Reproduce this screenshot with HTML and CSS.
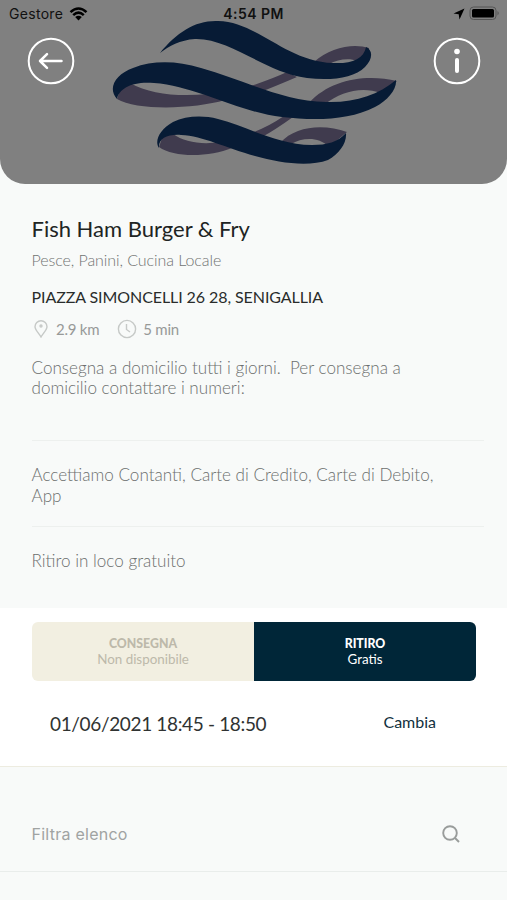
FILE: index.html
```html
<!DOCTYPE html>
<html lang="it">
<head>
<meta charset="utf-8">
<meta name="viewport" content="width=device-width, initial-scale=1">
<title>Fish Ham Burger &amp; Fry</title>
<link rel="stylesheet" href="styles.css">
</head>
<body>
<header class="hero">
  <svg class="hero-logo" viewBox="0 0 507 184" aria-hidden="true">
    <g class="ribbon-back">
      <path d="M314 62C330 47 354 43 369 48L367 60L357 61C350 58 338 59 329 64Z"/>
      <path d="M287 72Q272 79 245 88L258 93Q276 86 297 77Z"/>
      <path d="M309 103C331 79 366 74 397 81L381 93C361 86 341 92 325 104Z"/>
      <path d="M284 116Q268 127 251 133L262 137Q275 130 293 117Z"/>
      <path d="M280 143C296 125 325 124 347 132L329 147C318 136 302 138 291 144Z"/>
      <path d="M122 84L130 83C150 94 177 97 208 94L225 100C195 109 137 111 117 99Z"/>
      <path d="M163 135L173 134C184 142 202 145 220 142L232 148C210 157 174 158 159 147Z"/>
    </g>
    <g class="ribbon-front">
      <path d="M160 53C177 32 196 20 218 21C258 22 285 61 333 63C351 64 364 59 366 47C373 50 373 59 365 67C354 78 331 81 307 78C264 72 230 38 195 39C180 40 169 46 160 53Z"/>
      <path d="M117 99C107 88 116 74 133 68C154 60 177 61 201 68C244 80 282 101 326 102C355 103 378 95 396 80C397 89 388 100 375 107C350 120 316 121 282 117C238 112 196 86 154 83C133 81 119 88 117 99Z"/>
      <path d="M159 148C154 141 160 129 173 122C186 116 202 115 218 119C249 127 275 144 312 145C327 145 338 142 346 133C347 143 339 154 328 160C309 167 279 163 255 156C226 148 203 136 181 135C167 134 158 139 159 148Z"/>
    </g>
  </svg>
  <div class="status-bar">
    <div class="carrier">Gestore
      <svg class="wifi" viewBox="0 0 19 14" aria-hidden="true"><path d="M1.500 5.200Q9.500-2.200 17.500 5.200M4.200 8.100Q9.500 3.200 14.800 8.100"/><path class="solid" d="M6.200 10.100Q9.500 7.400 12.800 10.100L9.500 13.500Z"/></svg>
    </div>
    <div class="clock">4:54 PM</div>
    <div class="power">
      <svg class="location" viewBox="0 0 12 12" aria-hidden="true"><path d="M11.500.5L.5 5.500L5.700 6.300L6.500 11.500Z"/></svg>
      <svg class="battery" viewBox="0 0 31 15" aria-hidden="true"><rect class="case" x="1" y="1" width="26" height="12.500" rx="3.500"/><rect x="3" y="3" width="22" height="8.500" rx="1.500"/><path class="tip" d="M28.500 5Q31 7.200 28.500 9.500Z"/></svg>
    </div>
  </div>
  <nav class="hero-nav">
    <button class="round" aria-label="Indietro"><svg viewBox="0 0 48 48"><circle cx="24" cy="24" r="22.300"/><path d="M34.500 24H13M20 17.200L13 24L20 30.800"/></svg></button>
    <button class="round" aria-label="Informazioni"><svg viewBox="0 0 48 48"><circle cx="24" cy="24" r="22.300"/><path class="thick" d="M24 23V34"/><circle class="dot" cx="24" cy="14.500" r="2.800"/></svg></button>
  </nav>
</header>
<main>
  <section class="details">
    <h1>Fish Ham Burger &amp; Fry</h1>
    <p class="categories">Pesce, Panini, Cucina Locale</p>
    <p class="address">PIAZZA SIMONCELLI 26 28, SENIGALLIA</p>
    <div class="meta">
      <svg class="pin" viewBox="0 0 14 18" aria-hidden="true"><path d="M7 17C5.500 14 1 10 1 6.800A6 6 0 0 1 13 6.800C13 10 8.500 14 7 17Z"/><circle cx="7" cy="6" r="1"/></svg>
      <span>2.9 km</span>
      <svg class="time-icon" viewBox="0 0 20 20" aria-hidden="true"><circle cx="10" cy="10" r="8.600"/><path d="M9.500 5V10.500L13 13"/></svg>
      <span>5 min</span>
    </div>
    <p class="note delivery">Consegna a domicilio tutti i giorni.&nbsp; Per consegna a<br>domicilio contattare i numeri:</p>
    <p class="note payments">Accettiamo Contanti, Carte di Credito, Carte di Debito,<br>App</p>
    <p class="note pickup">Ritiro in loco gratuito</p>
  </section>
  <section class="booking">
    <div class="modes">
      <button class="mode unavailable"><strong>CONSEGNA</strong><span>Non disponibile</span></button>
      <button class="mode selected"><strong>RITIRO</strong><span>Gratis</span></button>
    </div>
    <div class="slot"><span class="date">01/06/2021 18:45 - 18:50</span><a class="change">Cambia</a></div>
  </section>
  <section class="filter">
    <span>Filtra elenco</span>
    <svg class="search" viewBox="0 0 20 20" aria-hidden="true"><circle cx="9" cy="9" r="6.800"/><path d="M14 14L18 18"/></svg>
  </section>
</main>
</body>
</html>
```
FILE: styles.css
```css
* { box-sizing: border-box; }
body { margin: 0; height: 900px; overflow: hidden; background: #f8faf9; font-family: Lato, "Liberation Sans", sans-serif; }
h1, p { margin: 0; white-space: nowrap; }
button { border: 0; padding: 0; font: inherit; background: none; }
svg { display: block; flex: none; }
.hero { position: relative; height: 184px; background: #808080; border-radius: 0 0 25px 25px; overflow: hidden; }
.hero-logo { position: absolute; inset: 0; width: 507px; height: 184px; }
.ribbon-back { fill: #403b4e; }
.ribbon-front { fill: #071b35; }
.status-bar { position: relative; display: grid; grid-template-columns: 1fr auto 1fr; align-items: center; height: 27px; padding: 0 7px 0 9px; font: 14px Inter, sans-serif; color: #111; }
.carrier { display: flex; align-items: center; gap: 6px; letter-spacing: .3px; }
.wifi { width: 19px; height: 14px; fill: none; stroke: #000; stroke-width: 2.5; }
.wifi .solid { fill: #000; stroke: none; }
.clock { margin-right: 2px; font-weight: 600; letter-spacing: .45px; }
.power { display: flex; justify-content: flex-end; align-items: center; gap: 4px; }
.location { width: 12px; height: 12px; }
.battery { width: 31px; height: 15px; }
.battery .case { fill: none; stroke: #555; stroke-width: 1; }
.battery .tip { fill: #555; }
.hero-nav { position: relative; display: flex; justify-content: space-between; padding: 10px 26px 0 27px; }
.round, .round svg { width: 48px; height: 48px; }
.round svg { fill: none; stroke: #fff; stroke-width: 2; stroke-linecap: round; stroke-linejoin: round; }
.round path { stroke-width: 2.5; }
.round .thick { stroke-width: 4; }
.round .dot { fill: #fff; stroke: none; }
.details { height: 424px; padding: 31px 23px 0 31.5px; }
h1 { font-size: 22px; line-height: 27px; font-weight: 400; color: #202423; }
.categories { margin-top: 8px; font-size: 16px; line-height: 20px; letter-spacing: -.07px; color: #707372; font-weight: 300; }
.address { margin-top: 17px; font-size: 16px; line-height: 19px; letter-spacing: -.08px; color: #292c2b; }
.meta { display: flex; align-items: center; height: 20px; margin-top: 13px; color: #979998; font-size: 15px; letter-spacing: -.25px; }
.pin { width: 14px; height: 18px; margin: 0 8.5px 0 2px; }
.time-icon { width: 20px; height: 20px; margin: 0 6px 0 18px; }
.pin, .time-icon { fill: none; stroke: #c6c9c7; stroke-width: 1.4; }
.note { color: #6c6f6e; font-size: 17.08px; line-height: 20.5px; font-weight: 300; }
.delivery { margin-top: 19px; height: 83px; line-height: 20px; border-bottom: 1px solid #edf0ee; }
.payments { padding-top: 24px; height: 86px; border-bottom: 1px solid #edf0ee; }
.pickup { padding-top: 24px; }
.booking { height: 159px; padding: 14px 31px 0 32px; background: #fff; border-bottom: 1px solid #edece0; }
.modes { display: grid; grid-template-columns: 1fr 1fr; height: 59px; border-radius: 6px; overflow: hidden; }
.mode { display: flex; flex-direction: column; align-items: center; justify-content: center; padding-bottom: 1px; font-size: 13.4px; line-height: 16px; }
.mode strong { font-size: 12.3px; line-height: 17px; font-weight: 900; }
.mode span { line-height: 15px; }
.unavailable { background: #f2efe1; color: #bdb9aa; }
.selected { background: #002638; color: #fff; }
.slot { display: flex; justify-content: space-between; align-items: center; height: 24px; margin-top: 30px; padding: 0 40px 0 18px; }
.date { font-size: 19px; letter-spacing: -.35px; color: #303332; }
.change { padding-bottom: 4px; font-size: 16px; color: #12313e; }
.filter { display: flex; justify-content: space-between; align-items: center; height: 105px; padding: 30px 46px 0 31.5px; border-bottom: 1px solid #e9edeb; color: #a0a3a2; font: 16px Inter, sans-serif; letter-spacing: .25px; }
.search { width: 20px; height: 20px; fill: none; stroke: #999c9b; stroke-width: 1.9; }
```
